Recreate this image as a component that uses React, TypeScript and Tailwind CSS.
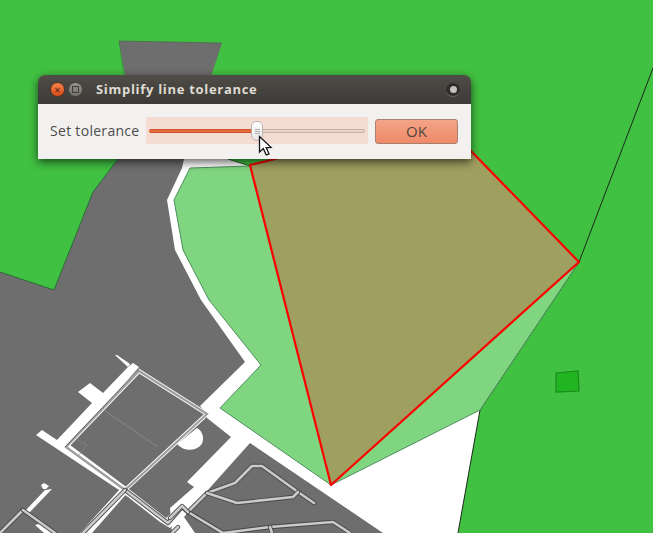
import React from "react";

const font = { fontFamily: '"Open Sans", "Noto Sans", sans-serif' };

function MapLayer() {
  const road = (pts: string, key: string) => (
    <g key={key}>
      <polyline points={pts} fill="none" stroke="#484848" strokeWidth="4.4" strokeLinejoin="round" strokeLinecap="round" />
      <polyline points={pts} fill="none" stroke="#cbcbcb" strokeWidth="2.6" strokeLinejoin="round" strokeLinecap="round" />
    </g>
  );
  return (
    <svg className="absolute inset-0" width="653" height="533" viewBox="0 0 653 533">
      <rect width="653" height="533" fill="#41c141" />
      {/* white ground */}
      <polygon points="170,140 222,150 228,159 250,166 283,157 470,150 579,262 480,410 458,533 0,533 0,400" fill="#ffffff" />
      <polyline points="653,68 579,262 480,410 458,533" fill="none" stroke="#1c2a1c" strokeWidth="1" />
      <line x1="228" y1="159" x2="250" y2="166" stroke="#1f6b1f" strokeWidth="1" />
      {/* light green parcel */}
      <polygon
        points="190,168 250,166 331,485 220,408 261,365 209,300 183,250 174,200"
        fill="#80d580"
        stroke="#4f8f5f"
        strokeWidth="1"
      />
      <polygon points="331,485 480,410 579,262" fill="#80d580" stroke="#4f8f5f" strokeWidth="1" />
      {/* selected polygon */}
      <polygon points="250,165 331,485 579,262 470,150 283,157" fill="#9f9f60" stroke="#ff0000" strokeWidth="2.2" strokeLinejoin="round" />
      {/* grey main area */}
      <polygon
        points="119,41 222,43 200,110 184,159 182,168 167,200 175,250 201,300 245,362 200,406 207,414 207,418 231,437 187,482 194,487 170,508 172,533 0,533 0,272 54,290 93,192 118,159 128,90"
        fill="#6e6e6e"
      />
      <polyline points="0,272 54,290 93,192 118,159" fill="none" stroke="#2c6a3c" strokeWidth="1" />
      <polyline points="222,43 119,41 125,80" fill="none" stroke="#4a5a4a" strokeWidth="0.6" />
      {/* lower right grey block */}
      <polygon points="250,443 383,533 195,533 184,517 190,510" fill="#6e6e6e" />
      {/* white bands around building */}
      <polygon
        points="133,363 139,367 70,445 125,486 166,518 182,504 188,509 170,528 160,522 119,490 36,435 42,430 57,440 92,403 78,392 90,383 103,393 128,367"
        fill="#ffffff"
      />
      <polygon points="115,355 117,355 130,364 128,367" fill="#ffffff" />
      <polygon points="121,488 129,491 92,533 80,533" fill="#ffffff" />
      <path d="M177 444 L197 428 C203 431 205 440 201 445 C196 451 184 452 177 444 Z" fill="#ffffff" />
      <polygon points="45,490 52,489 29,513 26,510" fill="#ffffff" />
      <polygon points="41,485 44,483 49,486 46,489 43,489" fill="#ffffff" />
      <polygon points="35,525 39,524 55,533 44,533" fill="#ffffff" />
      {/* building outlines */}
      <polygon points="139,371 207,414 125,490 66,447" fill="none" stroke="#ffffff" strokeWidth="4" strokeLinejoin="miter" />
      <polygon points="139,371 207,414 125,490 66,447" fill="none" stroke="#9e9e9e" strokeWidth="2.2" strokeLinejoin="miter" />
      <polyline points="139,369 65,447" fill="none" stroke="#4a4a4a" strokeWidth="0.8" />
      <polyline points="105,411 158,447" stroke="#9a9a9a" strokeWidth="0.6" fill="none" />
      <polyline points="78,440 87,445 79,455" stroke="#8c8c8c" strokeWidth="0.6" fill="none" />
      {road("125,490 168,523 182,507 189,513", "a")}
      {road("125,490 83,533", "b")}
      {road("23,510 0,533", "c")}
      {road("23,510 55,533", "d")}
      {road("314,503 298,492 262,466 252,466 235,483 207,493 188,512", "e")}
      {road("207,493 237,503 293,497 298,492", "f")}
      {road("188,512 223,533 270,527 333,522 350,533", "g")}
      {road("270,527 272,533", "h")}
      {road("170,518 182,506 188,512", "i")}
      {road("172,533 178,527", "j")}
      {/* small square */}
      <polygon points="556,373 578,371 579,391 556,392" fill="#22b522" stroke="#1b8a1b" strokeWidth="1.2" />
    </svg>
  );
}

function Cursor() {
  return (
    <svg className="absolute left-[257px] top-[134px]" width="18" height="24" viewBox="0 0 18 24">
      <path d="M2.5 2.5 L2.5 18 L6.3 14.6 L9.3 21 L12 19.8 L9.2 13.6 L14 13.4 Z" fill="#fff" stroke="#111" strokeWidth="1.3" strokeLinejoin="miter" />
    </svg>
  );
}

export default function App() {
  return (
    <div className="relative w-[653px] h-[533px] overflow-hidden bg-[#41c141]" style={font}>
      <MapLayer />
      <div className="absolute left-[38px] top-[75px] w-[433px] h-[84px] flex flex-col rounded-t-[7px] overflow-hidden shadow-[0_3px_10px_rgba(0,0,0,0.65)]">
        <div className="h-[29px] shrink-0 flex items-center pl-[12px] pr-[11px] bg-gradient-to-b from-[#504c47] to-[#3c3b37]">
          <span className="w-[15px] h-[15px] rounded-full bg-gradient-to-b from-[#f6824a] to-[#dc4a16] border border-[#54301f] flex items-center justify-center text-[11px] leading-none text-[#4e2413]">
            ×
          </span>
          <span className="ml-[3px] w-[15px] h-[15px] rounded-full bg-gradient-to-b from-[#96938d] to-[#75726c] border border-[#45433f] flex items-center justify-center">
            <span className="block w-[7px] h-[7px] border border-[#3f3d3a]" />
          </span>
          <span className="ml-[13px] text-[13px] font-bold tracking-[0.7px] text-[#dfdbd2] leading-none">
            Simplify line tolerance
          </span>
          <span className="ml-auto w-[14px] h-[14px] rounded-full bg-[#2e2d2a] border-b border-[#6a6862] flex items-center justify-center">
            <span className="block w-[7px] h-[7px] rounded-full bg-[#c4c2bd]" />
          </span>
        </div>
        <div className="flex-1 bg-[#f2f1ef] flex items-center pl-[12px] pr-[13px] pb-[2px]">
          <span className="text-[14px] text-[#4c4c4c] w-[96px] shrink-0 tracking-[0.3px]">Set tolerance</span>
          <div className="w-[222px] h-[27px] bg-[#f4dcd2] flex items-center px-[3px] relative shrink-0">
            <div className="flex-1 flex items-center h-[4px]">
              <div className="w-[107px] h-[4px] rounded-l-full bg-[#e9683a] border-y border-[#c9562e]" />
              <div className="flex-1 h-[4px] rounded-r-full bg-[#e8d3c9] border border-[#c8b2a6]" />
            </div>
            <div className="absolute left-[105px] top-[4px] w-[12px] h-[20px] rounded-t-[6px] rounded-b-[7px] bg-gradient-to-b from-white to-[#e9e8e5] border border-[#b9b5ae] flex flex-col items-center justify-center gap-[1px]">
              <span className="block w-[5px] h-px bg-[#aaa]" />
              <span className="block w-[5px] h-px bg-[#aaa]" />
              <span className="block w-[5px] h-px bg-[#aaa]" />
            </div>
          </div>
          <button className="ml-[7px] mt-[2px] w-[83px] h-[25px] rounded-[3px] border border-[#a97f6e] bg-gradient-to-b from-[#f4a488] to-[#ee8a68] text-[15px] leading-none text-[#54463f] flex items-center justify-center">
            OK
          </button>
        </div>
      </div>
      <Cursor />
    </div>
  );
}
